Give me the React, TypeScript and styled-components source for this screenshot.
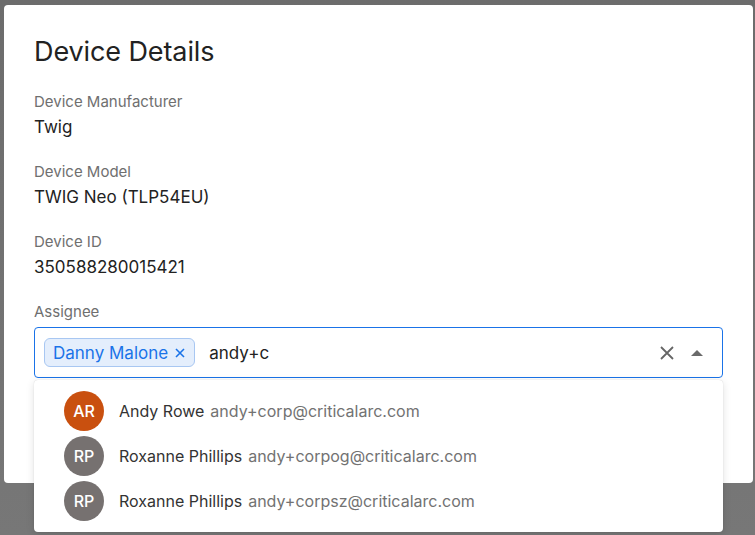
import React from 'react';
import styled, { createGlobalStyle } from 'styled-components';

const GlobalStyle = createGlobalStyle`
  html, body {
    margin: 0;
    padding: 0;
    width: 755px;
    height: 535px;
    overflow: hidden;
  }
  body {
    font-family: Inter, "Noto Sans", sans-serif;
  }
`;

const Backdrop = styled.div`
  position: relative;
  width: 755px;
  height: 535px;
  background: linear-gradient(180deg, #6c6c6c 0%, #777777 100%);
  padding: 5px 2px 0 4px;
  box-sizing: border-box;
`;

const Dialog = styled.div`
  position: relative;
  width: 749px;
  height: 478px;
  background: #ffffff;
  border-radius: 4px;
  padding: 22px 30px 0 30px;
  box-sizing: border-box;
  color: #222222;
`;

const Title = styled.h2`
  margin: 0 0 14px 0;
  font-size: 27px;
  font-weight: 400;
  letter-spacing: -0.1px;
  color: #222222;
  line-height: 50px;
`;

const Field = styled.div`
  display: flex;
  flex-direction: column;
  margin-bottom: 20px;
`;

const Label = styled.div`
  font-size: 15px;
  color: #6f6f6f;
  line-height: 22px;
`;

const Value = styled.div`
  font-size: 17px;
  color: #222222;
  line-height: 28px;
`;

const Combo = styled.div`
  position: relative;
  margin-top: 4px;
`;

const InputBox = styled.div`
  display: flex;
  align-items: center;
  height: 51px;
  border: 1px solid #1a73e8;
  border-radius: 4px;
  padding: 0 13px 0 9px;
  box-sizing: border-box;
  gap: 14px;
`;

const Chip = styled.div`
  display: flex;
  align-items: center;
  gap: 6px;
  height: 29px;
  padding: 0 8px;
  background: #e4eefc;
  border: 1px solid #a8c7f2;
  border-radius: 6px;
  box-sizing: border-box;
  color: #1a73e8;
  font-size: 17px;
`;

const TypedText = styled.div`
  flex: 1;
  font-size: 17px;
  color: #222222;
`;

const Actions = styled.div`
  display: flex;
  align-items: center;
  gap: 6px;
`;

const IconButton = styled.div`
  display: flex;
  align-items: center;
  justify-content: center;
  width: 24px;
  height: 24px;
`;

const Menu = styled.div`
  position: absolute;
  left: 0;
  right: 0;
  top: 53px;
  background: #ffffff;
  border-radius: 4px;
  box-shadow: 0 2px 8px rgba(0, 0, 0, 0.12), 0 0 1px rgba(0, 0, 0, 0.2);
  padding: 8px 0 9px 0;
  z-index: 2;
`;

const Option = styled.div`
  display: flex;
  align-items: center;
  gap: 15px;
  height: 45px;
  padding-left: 30px;
`;

const Avatar = styled.div<{ $bg: string }>`
  width: 40px;
  height: 40px;
  border-radius: 50%;
  background: ${(p) => p.$bg};
  color: #ffffff;
  display: flex;
  align-items: center;
  justify-content: center;
  font-size: 16px;
  font-weight: 500;
`;

const Name = styled.span`
  font-size: 16px;
  color: #333333;
`;

const Email = styled.span`
  font-size: 16px;
  color: #727272;
  margin-left: 6px;
`;

const options = [
  { initials: 'AR', color: '#c9500f', name: 'Andy Rowe', email: 'andy+corp@criticalarc.com' },
  { initials: 'RP', color: '#767170', name: 'Roxanne Phillips', email: 'andy+corpog@criticalarc.com' },
  { initials: 'RP', color: '#767170', name: 'Roxanne Phillips', email: 'andy+corpsz@criticalarc.com' },
];

const fields = [
  { label: 'Device Manufacturer', value: 'Twig' },
  { label: 'Device Model', value: 'TWIG Neo (TLP54EU)' },
  { label: 'Device ID', value: '350588280015421' },
];

export default function App() {
  return (
    <>
      <GlobalStyle />
      <Backdrop>
        <Dialog>
          <Title>Device Details</Title>
          {fields.map((f) => (
            <Field key={f.label}>
              <Label>{f.label}</Label>
              <Value>{f.value}</Value>
            </Field>
          ))}
          <Field>
            <Label>Assignee</Label>
            <Combo>
              <InputBox>
                <Chip>
                  Danny Malone
                  <svg width="12" height="12" viewBox="0 0 12 12">
                    <path d="M2 2 L10 10 M10 2 L2 10" stroke="#1a73e8" strokeWidth="1.6" />
                  </svg>
                </Chip>
                <TypedText>andy+c</TypedText>
                <Actions>
                  <IconButton>
                    <svg width="16" height="16" viewBox="0 0 16 16">
                      <path d="M2 2 L14 14 M14 2 L2 14" stroke="#666666" strokeWidth="1.8" />
                    </svg>
                  </IconButton>
                  <IconButton>
                    <svg width="14" height="8" viewBox="0 0 14 8">
                      <path d="M1 7 L7 1 L13 7 Z" fill="#6a6a6a" />
                    </svg>
                  </IconButton>
                </Actions>
              </InputBox>
              <Menu>
                {options.map((o, i) => (
                  <Option key={i}>
                    <Avatar $bg={o.color}>{o.initials}</Avatar>
                    <div>
                      <Name>{o.name}</Name>
                      <Email>{o.email}</Email>
                    </div>
                  </Option>
                ))}
              </Menu>
            </Combo>
          </Field>
        </Dialog>
      </Backdrop>
    </>
  );
}
